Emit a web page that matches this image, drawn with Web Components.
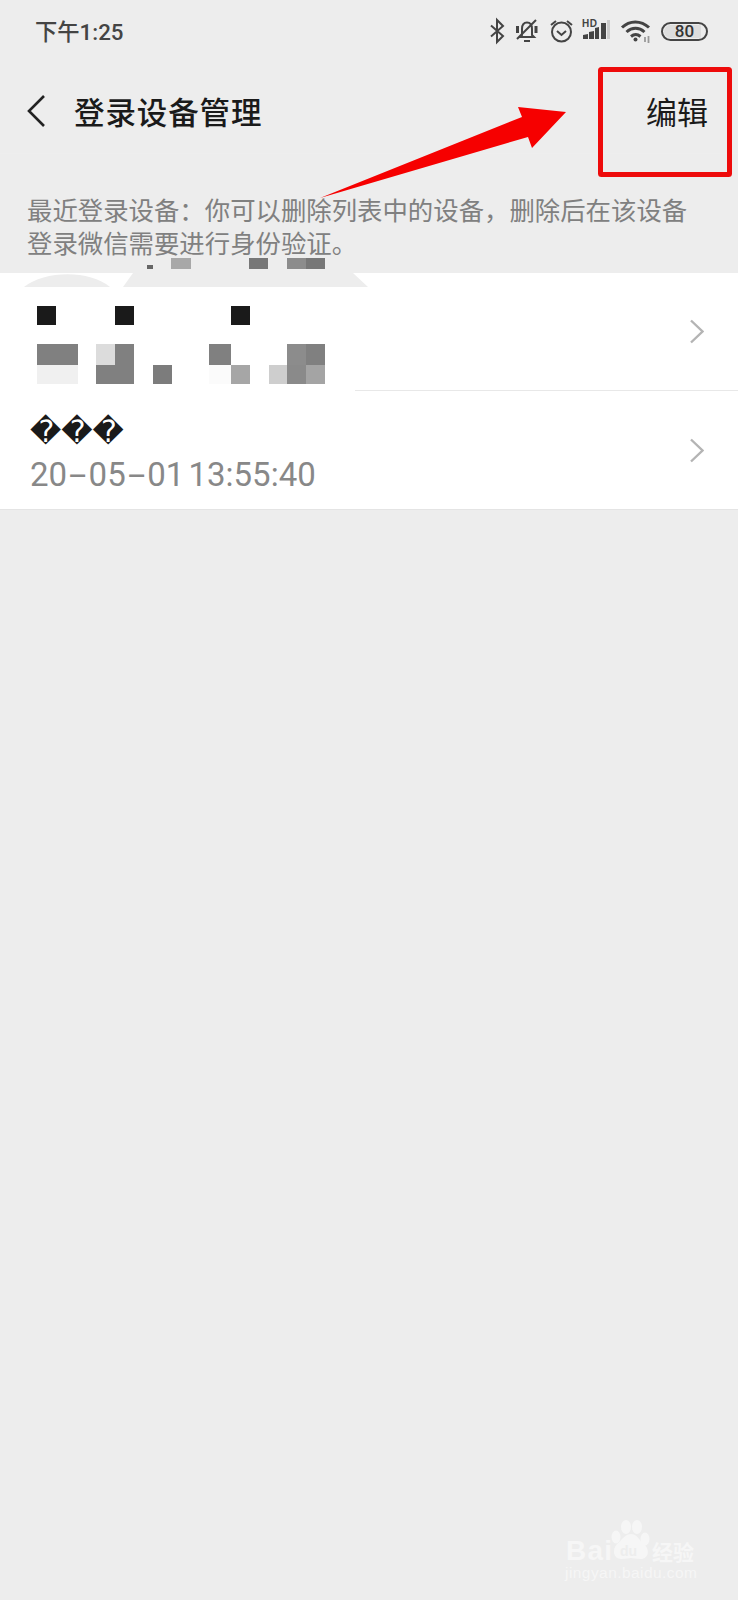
<!DOCTYPE html>
<html lang="zh-CN">
<head>
<meta charset="utf-8">
<title>登录设备管理</title>
<style>
html,body{margin:0;padding:0;background:#ededed;}
body{font-family:"Noto Sans CJK SC","Noto Sans",sans-serif;}
</style>
</head>
<body>
<app-page>
  <status-bar></status-bar>
  <nav-bar title-text="登录设备管理" action="编辑"></nav-bar>
  <hint-text>最近登录设备&#xFF1A;你可以删除列表中的设备&#xFF0C;删除后在该设备<br>登录微信需要进行身份验证。</hint-text>
  <device-list>
    <device-row class="first"><mosaic-block></mosaic-block></device-row>
    <device-row class="second" name="���" time="20-05-01 13:55:40"></device-row>
  </device-list>
  <annotation-layer></annotation-layer>
  <watermark-logo></watermark-logo>
</app-page>
<script>
function define(name, html){
  customElements.define(name, class extends HTMLElement{
    connectedCallback(){
      if(this.shadowRoot) return;
      const root=this.attachShadow({mode:"open"});
      root.innerHTML=typeof html==="function"?html(this):html;
    }
  });
}
define("app-page",`<style>
:host{display:flex;flex-direction:column;position:relative;width:738px;height:1600px;overflow:hidden;background:#ededed;}
</style><slot></slot>`);

define("status-bar",`<style>
:host{display:flex;align-items:center;justify-content:space-between;height:60px;padding:2px 30px 0 35px;box-sizing:border-box;flex:none;}
.t{font:500 22.300px/28px Roboto,"Noto Sans CJK SC",sans-serif;color:#444;}
.t b{font:500 22.300px/28px "Noto Sans CJK SC",sans-serif;}
.i{display:flex;align-items:center;height:30px;}
svg{display:block;flex:none;overflow:visible;}
.bat{position:relative;box-sizing:border-box;width:47px;height:19px;border:2.500px solid #444;border-radius:10px;margin-left:10px;overflow:hidden;display:flex;align-items:center;justify-content:center;font:500 17px/14px Roboto,sans-serif;color:#333;background:linear-gradient(90deg,#ddd 0,#ddd 90%,transparent 90%) content-box;padding:1px;}
</style>
<span class="t"><b>下午</b>1:25</span>
<span class="i">
<svg width="14" height="24" viewBox="0 0 14 24" fill="none" stroke="#444" stroke-width="2"><path d="M1 6.500 13 17 7 23V1l6 6L1 17.500"/></svg>
<svg style="margin-left:11px" width="23" height="24" viewBox="0 0 23 24" fill="none" stroke="#444" stroke-width="2"><path d="M7 16V10c0-4 2-6.500 5-6.500S17 6 17 10v6l2 2H5zM9 22h6M21 1 2 20"/><path d="M2.500 7v7M21 7v7" stroke-width="3"/></svg>
<svg style="margin-left:12px" width="23" height="24" viewBox="0 0 23 24" fill="none" stroke="#444" stroke-width="2"><circle cx="11.500" cy="13" r="9.500"/><path d="M7 12l4.500 4 4.500-4M1 6l5-4M22 6l-5-4"/></svg>
<svg style="margin-left:9px" width="28" height="24" viewBox="0 0 28 24"><text x="0" y="7.500" font-family="Liberation Sans" font-size="10" font-weight="700" letter-spacing=".6" fill="#444">HD</text><path d="M1 20v-4l5-1v5zM7 20v-7l5-1v8zM13 20V9l4-1v12zM19 20V4h5v16z" fill="#444"/><rect x="25" y="1" width="3" height="19" fill="#ccc"/></svg>
<svg style="margin-left:11px" width="30" height="24" viewBox="0 0 30 24" fill="none" stroke="#444" stroke-width="3"><path d="M1 8.500C8.500 1 20 1 28 8.500M5.500 13c5.500-5 12.500-5 18 0M10 17.500c3-2.500 6.500-2.500 9.500 0"/><circle cx="14.500" cy="20.500" r="2" fill="#444" stroke="none"/><path d="M24 18v5M27.500 17v7" stroke="#999" stroke-width="1.800"/></svg>
<span class="bat">80</span>
</span>`);

define("nav-bar",h=>`<style>
:host{display:flex;align-items:center;height:94px;padding:8px 30px 0 27px;box-sizing:border-box;flex:none;border-bottom:1px solid #eee;}
svg{display:block;flex:none;}
.t{margin-left:28px;font:500 30.500px/40px "Noto Sans CJK SC",sans-serif;color:#1a1a1a;flex:1;letter-spacing:.9px;}
.a{font:400 31px/40px "Noto Sans CJK SC",sans-serif;color:#1a1a1a;}
</style>
<svg width="19" height="34" viewBox="0 0 19 34" fill="none" stroke="#222" stroke-width="2.600"><path d="M17 2 2 17l15 15"/></svg>
<span class="t">${h.getAttribute("title-text")}</span><span class="a">${h.getAttribute("action")}</span>`);

define("hint-text",`<style>
:host{display:block;padding:39px 27px 14px;font:400 25.400px/33px "Noto Sans CJK SC",sans-serif;color:#808080;flex:none;white-space:nowrap;}
</style><slot></slot>`);

define("device-list",`<style>
:host{display:block;background:#fff;flex:none;}
</style><slot></slot>`);

define("device-row",h=>{
  const time=(h.getAttribute("time")||"").split("-").join('<span class="h">-</span>');
  return `<style>
:host{display:flex;align-items:center;position:relative;height:118px;padding:0 34px 0 30px;box-sizing:border-box;border-bottom:1px solid #e8e8e8;}
:host(.second){height:119px;border-bottom-color:#e4e4e4;}
.c{flex:1;min-width:0;display:flex;flex-direction:column;padding-top:10px;}
.n{font:400 30.500px/42px "DejaVu Sans",sans-serif;color:#1a1a1a;height:42px;margin-top:-3px;}
.d{font:400 33px/44px Roboto,sans-serif;color:#888;word-spacing:-4px;}
.h{display:inline-block;width:21.500px;text-align:center;transform:scaleX(1.900);}
svg{display:block;flex:none;}
</style>
<div class="c">${h.hasAttribute("name")?`<div class="n">${h.getAttribute("name")}</div><div class="d">${time}</div>`:""}<slot></slot></div>
<svg width="14" height="25" viewBox="0 0 14 25" fill="none" stroke="#b4b4b4" stroke-width="2.400"><path d="M1 1.500 12.500 12.500 1 23.500"/></svg>`;});

define("mosaic-block",`<style>
:host{position:absolute;left:0;top:-15px;width:400px;height:133px;display:block;}
svg{display:block;}
</style>
<svg width="400" height="133" viewBox="0 258 400 133" shape-rendering="crispEdges">
<g fill="#ededed"><path d="M24 287C45 270 90 270 110 287Z" shape-rendering="auto"/><path d="M123 287 133 273H353L368 287Z" shape-rendering="auto"/></g>
<rect x="147" y="265" width="6" height="4" fill="#666"/>
<rect x="171" y="258" width="20" height="11" fill="#a8a8a8"/>
<rect x="249" y="258" width="19" height="11" fill="#777"/>
<rect x="287" y="258" width="19" height="11" fill="#8c8c8c"/>
<rect x="306" y="258" width="19" height="11" fill="#777"/>
<g fill="#1a1a1a"><rect x="37" y="306" width="19" height="19"/><rect x="115" y="306" width="19" height="19"/><rect x="231" y="306" width="19" height="19"/></g>
<rect x="37" y="344" width="41" height="21" fill="#808080"/>
<rect x="96" y="344" width="19" height="21" fill="#dcdcdc"/>
<rect x="115" y="344" width="19" height="21" fill="#808080"/>
<rect x="209" y="344" width="22" height="21" fill="#808080"/>
<rect x="287" y="344" width="19" height="21" fill="#8c8c8c"/>
<rect x="306" y="344" width="19" height="21" fill="#808080"/>
<rect x="37" y="365" width="41" height="19" fill="#f0f0f0"/>
<rect x="96" y="365" width="38" height="19" fill="#808080"/>
<rect x="153" y="365" width="19" height="19" fill="#7c7c7c"/>
<rect x="209" y="365" width="22" height="19" fill="#fbfbfb"/>
<rect x="231" y="365" width="19" height="19" fill="#a6a6a6"/>
<rect x="269" y="365" width="18" height="19" fill="#cecece"/>
<rect x="287" y="365" width="19" height="19" fill="#8a8a8a"/>
<rect x="306" y="365" width="19" height="19" fill="#a4a4a4"/>
<rect x="0" y="389" width="355" height="2" fill="#fff"/>
</svg>`);

define("annotation-layer",`<style>
:host{position:absolute;inset:0;display:block;pointer-events:none;}
svg{position:absolute;left:0;top:0;}
</style>
<svg width="738" height="220" viewBox="0 0 738 220">
<path d="M320 198 522 117 518 107 566 112 532 148 528 137Z" fill="#f60000"/>
<rect x="600.500" y="69.500" width="129" height="105" rx="1" fill="none" stroke="#ee0b0b" stroke-width="5"/>
</svg>`);

define("watermark-logo",`<style>
:host{position:absolute;left:560px;top:1515px;width:145px;height:70px;display:block;}
svg{display:block;overflow:visible;}
text{fill:#f6f6f6;}
</style>
<svg width="145" height="70" viewBox="560 1515 145 70">
<text x="566" y="1560" font-family="Liberation Sans" font-weight="700" font-size="28" textLength="46">Bai</text>
<g fill="#f6f6f6"><ellipse cx="626" cy="1527" rx="5" ry="7"/><ellipse cx="637" cy="1527" rx="5" ry="7"/><ellipse cx="616" cy="1537" rx="4.500" ry="6.500"/><ellipse cx="645" cy="1539" rx="4.500" ry="6.500"/><path d="M631 1534c6 0 8 6 13 10 6 5 5 15-3 15-4 0-7-1-10-1s-6 1-10 1c-8 0-9-10-4-15 5-4 8-10 14-10z"/></g>
<text x="620" y="1556" font-family="Liberation Sans" font-weight="700" font-size="14" style="fill:#ededed">du</text>
<text x="652" y="1560" font-family="Noto Sans CJK SC" font-weight="700" font-size="21">经验</text>
<text x="565" y="1578" font-family="Liberation Sans" font-size="15.500" textLength="132">jingyan.baidu.com</text>
</svg>`);
</script>
</body>
</html>
